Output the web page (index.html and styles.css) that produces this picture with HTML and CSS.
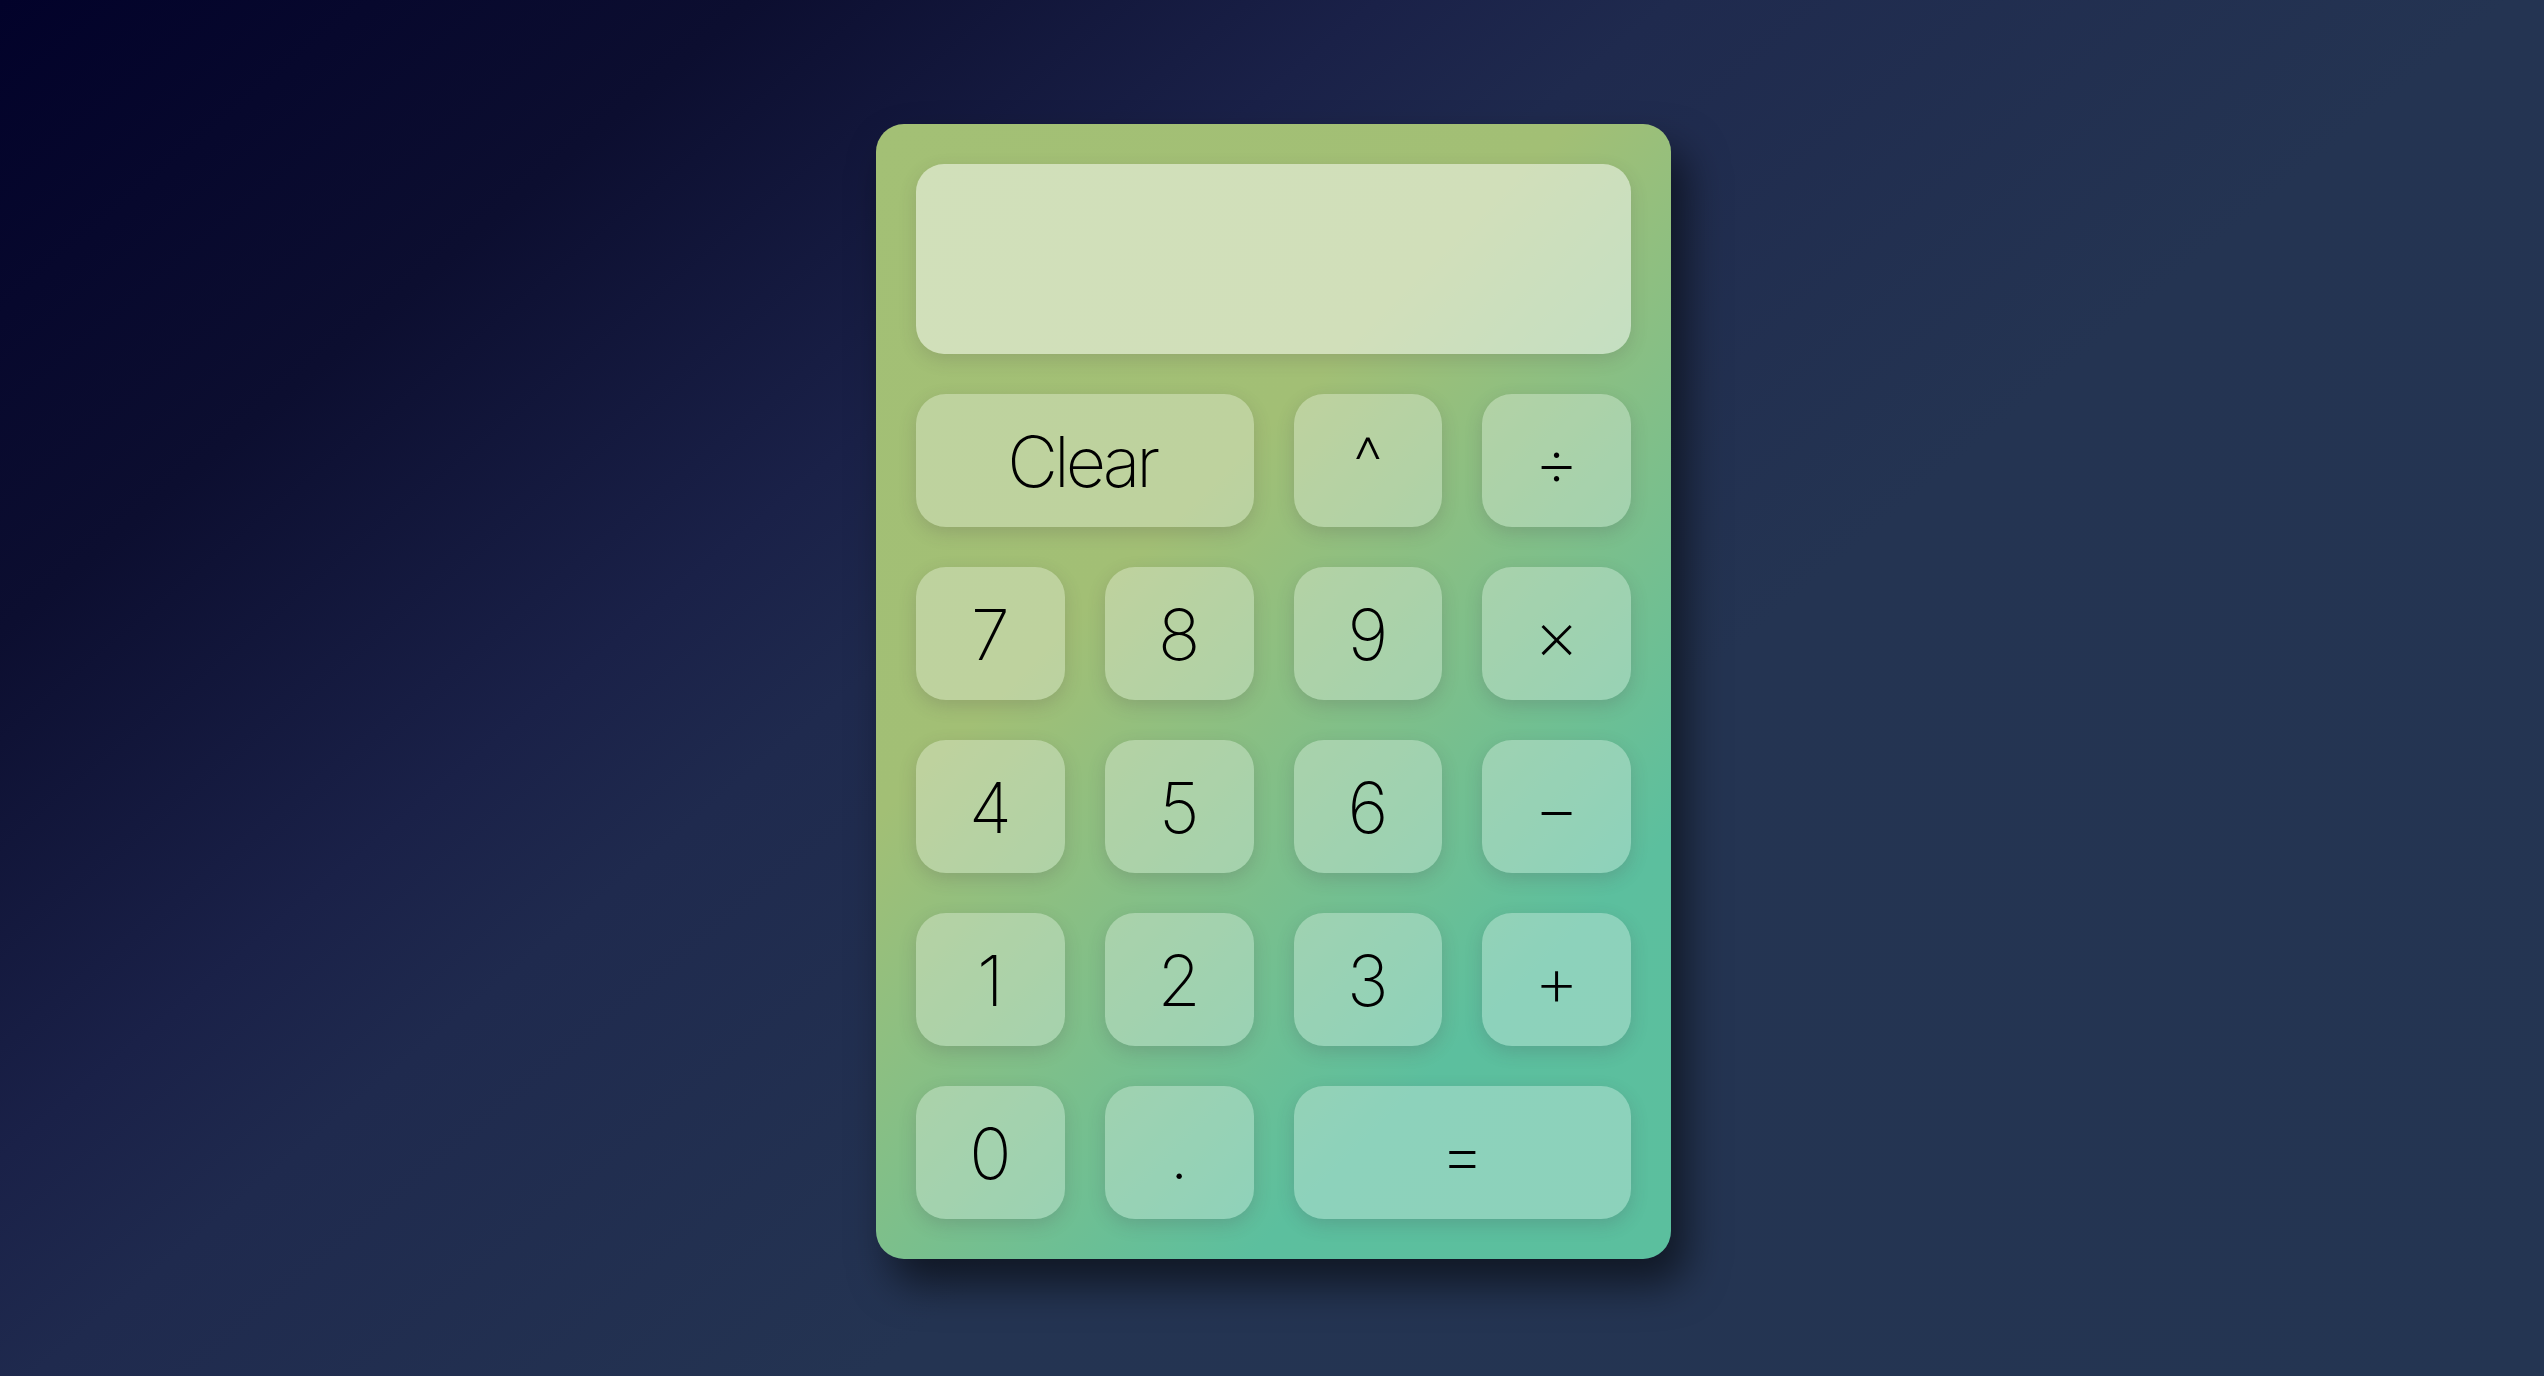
FILE: index.html
```html
<!DOCTYPE html>
<html lang="en">
<head>
<meta charset="utf-8">
<title>Calculator</title>
<link rel="stylesheet" href="styles.css">
</head>
<body>
  <main class="calculator">
    <div class="display"></div>
    <button class="key key-wide key-clear">Clear</button>
    <button class="key">^</button>
    <button class="key">÷</button>
    <button class="key">7</button>
    <button class="key">8</button>
    <button class="key">9</button>
    <button class="key">×</button>
    <button class="key">4</button>
    <button class="key">5</button>
    <button class="key">6</button>
    <button class="key">−</button>
    <button class="key">1</button>
    <button class="key">2</button>
    <button class="key">3</button>
    <button class="key">+</button>
    <button class="key">0</button>
    <button class="key">.</button>
    <button class="key key-wide">=</button>
  </main>
</body>
</html>
```

FILE: styles.css
```css
* {
  box-sizing: border-box;
}

html, body {
  margin: 0;
  height: 100%;
}

body {
  min-height: 100vh;
  display: flex;
  align-items: center;
  justify-content: center;
  padding-top: 6px;
  padding-left: 3px;
  background: linear-gradient(140deg, #02022a 0%, #0c0e30 18%, #1a2148 33%, #1f2a4e 40%, #243452 60%, #243552 100%);
  font-family: Inter, "Noto Sans", sans-serif;
}

.calculator {
  width: 795px;
  padding: 40px;
  border-radius: 28px;
  display: grid;
  grid-template-columns: repeat(4, 1fr);
  grid-template-rows: 190px repeat(5, 133px);
  gap: 40px;
  background: linear-gradient(135deg, #a3c075 0%, #a2bf75 36%, #5cbf9e 78%, #5bbf9e 100%);
  box-shadow: 15px 25px 40px rgba(0, 0, 0, 0.55);
}

.display {
  grid-column: 1 / -1;
  border-radius: 28px;
  background: rgba(255, 255, 255, 0.5);
  box-shadow: 0 6px 18px rgba(70, 50, 70, 0.16);
}

.key {
  border: none;
  margin: 0;
  padding: 3px 0 0;
  border-radius: 30px;
  background: rgba(255, 255, 255, 0.3);
  box-shadow: 0 6px 18px rgba(70, 50, 70, 0.18);
  font-family: Inter, "Noto Sans", sans-serif;
  font-weight: 200;
  font-size: 70px;
  line-height: 1;
  color: #000;
  display: flex;
  align-items: center;
  justify-content: center;
}

.key-wide {
  grid-column: span 2;
}

.key-clear {
  letter-spacing: -4px;
  padding-right: 6px;
}
```
